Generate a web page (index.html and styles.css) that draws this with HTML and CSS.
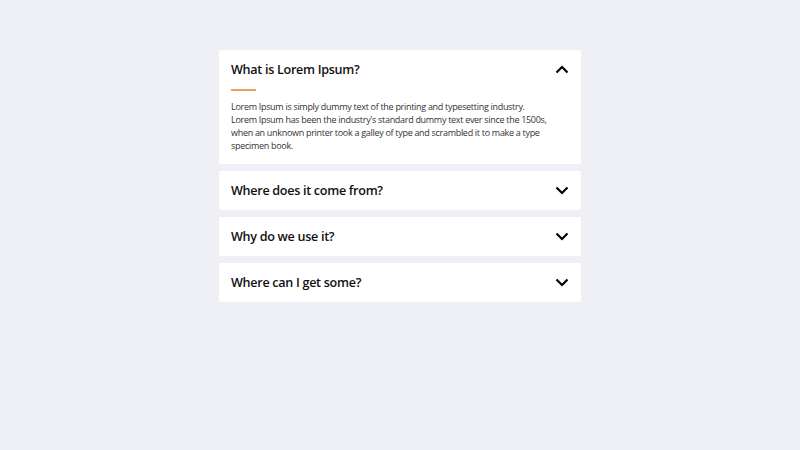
FILE: index.html
```html
<!doctype html>
<html lang="en">
<head>
    <meta charset="utf-8">
    <title>FAQ</title>
    <link rel="stylesheet" href="styles.css">
</head>
<body>
    <div class="accordion">
        <div class="item open">
            <div class="item-head">
                <h3>What is Lorem Ipsum?</h3>
                <svg class="chevron" width="14" height="9" viewBox="0 0 14 9"><path d="M1.5 7.5 L7 2 L12.5 7.5" fill="none" stroke="#000" stroke-width="2.2"/></svg>
            </div>
            <div class="item-body">
                <div class="line"></div>
                <p>Lorem Ipsum is simply dummy text of the printing and typesetting industry. Lorem Ipsum has been the industry's standard dummy text ever since the 1500s, when an unknown printer took a galley of type and scrambled it to make a type specimen book.</p>
            </div>
        </div>
        <div class="item">
            <div class="item-head">
                <h3>Where does it come from?</h3>
                <svg class="chevron" width="14" height="9" viewBox="0 0 14 9"><path d="M1.5 1.5 L7 7 L12.5 1.5" fill="none" stroke="#000" stroke-width="2.2"/></svg>
            </div>
        </div>
        <div class="item">
            <div class="item-head">
                <h3>Why do we use it?</h3>
                <svg class="chevron" width="14" height="9" viewBox="0 0 14 9"><path d="M1.5 1.5 L7 7 L12.5 1.5" fill="none" stroke="#000" stroke-width="2.2"/></svg>
            </div>
        </div>
        <div class="item">
            <div class="item-head">
                <h3>Where can I get some?</h3>
                <svg class="chevron" width="14" height="9" viewBox="0 0 14 9"><path d="M1.5 1.5 L7 7 L12.5 1.5" fill="none" stroke="#000" stroke-width="2.2"/></svg>
            </div>
        </div>
    </div>
</body>
</html>
```

FILE: styles.css
```css
body {
    margin: 0;
    background-color: #eef0f5;
    font-family: "Open Sans", "Noto Sans", sans-serif;
}

.accordion {
    width: 362px;
    margin: 50px auto 0;
    display: flex;
    flex-direction: column;
    gap: 7px;
}

.item {
    background-color: #ffffff;
    border-radius: 2px;
}

.item-head {
    height: 39px;
    padding: 0 12px;
    display: flex;
    align-items: center;
    justify-content: space-between;
}

.item-head h3 {
    margin: 0;
    font-size: 12.6px;
    font-weight: 600;
    letter-spacing: -0.3px;
    color: #111111;
}

.item-body {
    padding: 0 12px 11px;
}

.line {
    width: 25px;
    height: 1.5px;
    background-color: #e9a35f;
    margin-bottom: 9px;
}

.item-body p {
    margin: 0;
    font-size: 9px;
    line-height: 13.3px;
    letter-spacing: -0.3px;
    color: #333333;
    padding-right: 19px;
}
```
